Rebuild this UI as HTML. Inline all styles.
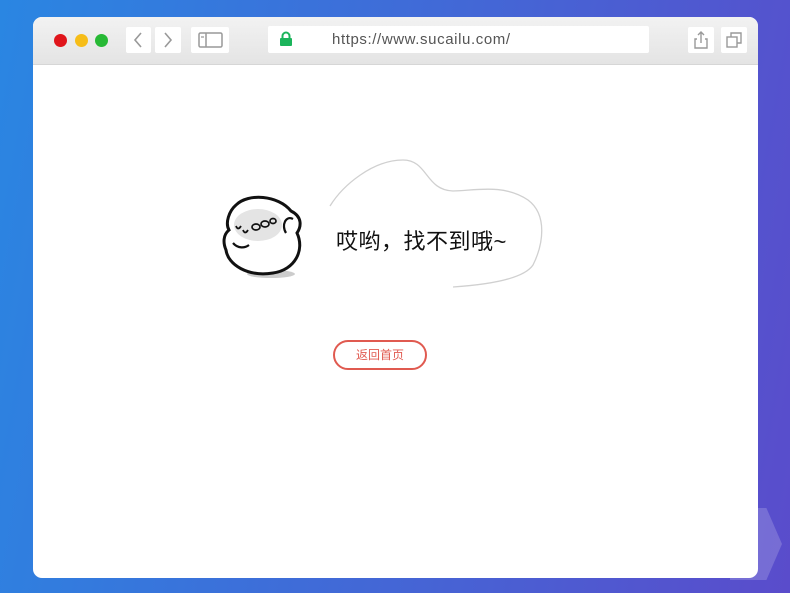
<!DOCTYPE html>
<html><head><meta charset="utf-8"><style>
*{margin:0;padding:0;box-sizing:border-box}
body{width:790px;height:593px;overflow:hidden;background:linear-gradient(100deg,#2a86e2 0%,#3f6cd8 45%,#5a4ccb 100%);position:relative;font-family:"Liberation Sans","Noto Sans CJK SC",sans-serif}
.win{position:absolute;left:33px;top:17px;width:725px;height:561px;background:#fff;border-radius:9px;overflow:hidden}
.bar{height:48px;background:linear-gradient(#f2f2f2,#e4e4e4);border-bottom:1px solid #d6d6d6;position:relative}
.dot{position:absolute;top:17px;width:13px;height:13px;border-radius:50%}
.btn{position:absolute;top:10px;height:26px;background:#fff;border-radius:2px}
.url{position:absolute;left:235px;top:9px;width:381px;height:27px;background:#fff;border-radius:2px;font-size:15px;color:#555;letter-spacing:0.6px}
.hex{position:absolute;left:730px;top:508px;width:52px;height:72px;background:rgba(255,255,255,0.18);clip-path:polygon(0 0,70% 0,100% 50%,70% 100%,0 100%)}
</style></head><body>
<div class="hex"></div>
<div class="win">
 <div class="bar">
  <div class="dot" style="left:21px;background:#e0151b"></div>
  <div class="dot" style="left:42px;background:#f6bd18"></div>
  <div class="dot" style="left:62px;background:#27b935"></div>
  <div class="btn" style="left:93px;width:25px"><svg width="25" height="26"><path d="M15 6 L9 13 L15 20" stroke="#999" stroke-width="1.6" fill="none"/></svg></div>
  <div class="btn" style="left:122px;width:26px"><svg width="26" height="26"><path d="M10 6 L16 13 L10 20" stroke="#999" stroke-width="1.6" fill="none"/></svg></div>
  <div class="btn" style="left:158px;width:38px"><svg width="38" height="26"><rect x="8" y="6" width="23" height="14" rx="1.5" stroke="#999" stroke-width="1.5" fill="none"/><line x1="15" y1="6" x2="15" y2="20" stroke="#999" stroke-width="1.5"/><line x1="10" y1="10" x2="13" y2="10" stroke="#999" stroke-width="1.2"/></svg></div>
  <div class="url"><svg style="position:absolute;left:11px;top:5px" width="14" height="16"><path d="M3.5 7 V5 a3.5 3.5 0 0 1 7 0 V7" stroke="#1bb45b" stroke-width="2" fill="none"/><rect x="1" y="7" width="12" height="8" rx="1" fill="#1bb45b"/></svg><span style="position:absolute;left:64px;top:5px">https://www.sucailu.com/</span></div>
  <div class="btn" style="left:655px;width:26px"><svg width="26" height="26"><path d="M9 12 H7 V21 H19 V12 H17" stroke="#999" stroke-width="1.4" fill="none"/><path d="M13 16 V5 M10 8 L13 5 L16 8" stroke="#999" stroke-width="1.4" fill="none"/></svg></div>
  <div class="btn" style="left:688px;width:26px"><svg width="26" height="26"><rect x="6" y="10" width="10" height="10" stroke="#999" stroke-width="1.4" fill="none"/><path d="M10 10 V6 H20 V16 H16" stroke="#999" stroke-width="1.4" fill="none"/></svg></div>
 </div>
 <svg style="position:absolute;left:0;top:48px" width="725" height="300">
  <path d="M297 141 C310 120 340 95 370 95 C395 95 392 125 420 126 C440 126 470 118 495 135 C515 150 510 180 500 200 C490 215 450 220 420 222" stroke="#d0d0d0" stroke-width="1.3" fill="none"/>
  <ellipse cx="238" cy="209" rx="24" ry="4" fill="#ccc"/>
  <path d="M203 140 C215 128 245 130 258 146 C270 152 268 162 264 168 C272 185 262 205 240 208 C215 212 195 200 193 185 C190 178 190 170 196 165 C192 158 196 146 203 140 Z" fill="#fff" stroke="#111" stroke-width="3"/>
  <ellipse cx="225" cy="160" rx="24" ry="16" fill="#e4e4e4"/>
  <path d="M200 178 C205 184 212 183 216 180" stroke="#111" stroke-width="2.2" fill="none"/>
  <path d="M203 161 q2 5 5 0 M210 165 q2 5 5 0" stroke="#111" stroke-width="1.8" fill="none"/>
  <ellipse cx="223" cy="162" rx="4" ry="3" stroke="#111" stroke-width="1.7" fill="none"/>
  <ellipse cx="232" cy="159" rx="4" ry="3" stroke="#111" stroke-width="1.7" fill="none"/>
  <ellipse cx="240" cy="156" rx="3" ry="2.5" stroke="#111" stroke-width="1.7" fill="none"/>
  <path d="M253 168 C248 160 253 150 260 154" stroke="#111" stroke-width="2.2" fill="none"/>
 </svg>
 <div style="position:absolute;left:303px;top:207px;font-size:22px;letter-spacing:0.5px;color:#111;white-space:nowrap">哎哟，找不到哦~</div>
 <div style="position:absolute;left:300px;top:323px;width:94px;height:30px;border:2px solid #e05a50;border-radius:15px;color:#e05a50;font-size:12px;text-align:center;line-height:26px">返回首页</div>
</div>
</body></html>
